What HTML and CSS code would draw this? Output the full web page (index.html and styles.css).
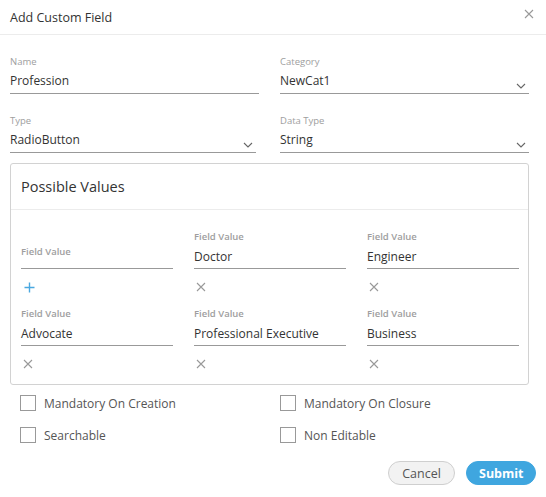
FILE: index.html
```html
<!DOCTYPE html>
<html>
<head>
<meta charset="utf-8">
<link rel="stylesheet" href="styles.css">
</head>
<body>
<div class="dialog">
  <div class="header">
    <span class="title">Add Custom Field</span>
    <span class="close"><svg width="10" height="10" viewBox="0 0 10 10"><path d="M1 1L9 9M9 1L1 9" stroke="#999" stroke-width="1.1"/></svg></span>
  </div>
  <div class="body">
    <div class="row2">
      <div class="field">
        <div class="label">Name</div>
        <div class="value">Profession</div>
      </div>
      <div class="field">
        <div class="label">Category</div>
        <div class="value select">NewCat1<svg class="chev" width="10" height="6" viewBox="0 0 10 6"><path d="M1 1L5 5L9 1" fill="none" stroke="#666" stroke-width="1.1"/></svg></div>
      </div>
    </div>
    <div class="row2 r2">
      <div class="field narrow">
        <div class="label">Type</div>
        <div class="value select">RadioButton<svg class="chev" width="10" height="6" viewBox="0 0 10 6"><path d="M1 1L5 5L9 1" fill="none" stroke="#666" stroke-width="1.1"/></svg></div>
      </div>
      <div class="field">
        <div class="label">Data Type</div>
        <div class="value select">String<svg class="chev" width="10" height="6" viewBox="0 0 10 6"><path d="M1 1L5 5L9 1" fill="none" stroke="#666" stroke-width="1.1"/></svg></div>
      </div>
    </div>
    <div class="panel">
      <div class="panel-head">Possible Values</div>
      <div class="grid">
        <div class="pv">
          <div class="label"></div>
          <div class="value empty"><span class="ph">Field Value</span></div>
          <div class="icon plus"><svg width="11" height="11" viewBox="0 0 11 11"><path d="M5.5 0.5V10.5M0.5 5.5H10.5" stroke="#4aa8e0" stroke-width="1.4"/></svg></div>
        </div>
        <div class="pv">
          <div class="label">Field Value</div>
          <div class="value">Doctor</div>
          <div class="icon"><svg width="10" height="10" viewBox="0 0 10 10"><path d="M1 1L9 9M9 1L1 9" stroke="#999" stroke-width="1.1"/></svg></div>
        </div>
        <div class="pv">
          <div class="label">Field Value</div>
          <div class="value">Engineer</div>
          <div class="icon"><svg width="10" height="10" viewBox="0 0 10 10"><path d="M1 1L9 9M9 1L1 9" stroke="#999" stroke-width="1.1"/></svg></div>
        </div>
        <div class="pv">
          <div class="label">Field Value</div>
          <div class="value">Advocate</div>
          <div class="icon"><svg width="10" height="10" viewBox="0 0 10 10"><path d="M1 1L9 9M9 1L1 9" stroke="#999" stroke-width="1.1"/></svg></div>
        </div>
        <div class="pv">
          <div class="label">Field Value</div>
          <div class="value">Professional Executive</div>
          <div class="icon"><svg width="10" height="10" viewBox="0 0 10 10"><path d="M1 1L9 9M9 1L1 9" stroke="#999" stroke-width="1.1"/></svg></div>
        </div>
        <div class="pv">
          <div class="label">Field Value</div>
          <div class="value">Business</div>
          <div class="icon"><svg width="10" height="10" viewBox="0 0 10 10"><path d="M1 1L9 9M9 1L1 9" stroke="#999" stroke-width="1.1"/></svg></div>
        </div>
      </div>
    </div>
    <div class="checks">
      <label class="check"><span class="box"></span>Mandatory On Creation</label>
      <label class="check"><span class="box"></span>Mandatory On Closure</label>
      <label class="check"><span class="box"></span>Searchable</label>
      <label class="check"><span class="box"></span>Non Editable</label>
    </div>
    <div class="actions">
      <button class="btn cancel">Cancel</button>
      <button class="btn submit">Submit</button>
    </div>
  </div>
</div>
</body>
</html>
```
FILE: styles.css
```css
* { box-sizing: border-box; }
html, body { margin: 0; padding: 0; background: #fff; }
body { font-family: "Open Sans", "Liberation Sans", sans-serif; color: #333; width: 546px; height: 497px; overflow: hidden; }
.dialog { width: 546px; height: 497px; background: #fff; }
.header { height: 35px; border-bottom: 1px solid #ececec; display: flex; align-items: center; justify-content: space-between; padding: 0 12px 0 10px; }
.title { font-size: 12.5px; color: #333; }
.close { display: flex; margin-top: -7px; }
.body { padding: 20px 17px 0 10px; }
.row2 { display: grid; grid-template-columns: 249px 249px; column-gap: 21px; }
.r2 { margin-top: 20px; }
.field.narrow .value { width: 246px; }
.label { font-size: 9.5px; color: #9e9e9e; height: 13px; line-height: 13px; }
.value { font-size: 12px; color: #333; height: 26px; line-height: 26px; border-bottom: 1px solid #999; position: relative; }
.select .chev { position: absolute; right: 3px; top: 15px; }
.panel { margin-top: 10px; width: 519px; border: 1px solid #d2d2d2; border-radius: 3px; height: 222px; }
.panel-head { font-size: 14.5px; color: #333; height: 46px; line-height: 46px; padding-left: 10px; border-bottom: 1px solid #ececec; }
.grid { display: grid; grid-template-columns: 152px 152px 152px; column-gap: 21px; padding: 20px 0 0 10px; }
.pv .label { height: 14px; font-weight: 600; font-size: 9.5px; color: #9e9e9e; }
.pv .value { height: 25px; }
.pv .value.empty { position: relative; }
.ph { position: absolute; left: 0; top: 1px; font-size: 9.5px; font-weight: 600; color: #9e9e9e; line-height: 13px; }
.icon { height: 38px; display: flex; align-items: flex-start; padding: 13px 0 0 2px; }
.icon.plus { padding: 13px 0 0 3px; }
.checks { display: grid; grid-template-columns: 260px 240px; row-gap: 16px; padding: 10px 0 0 10px; }
.check { display: flex; align-items: center; font-size: 12px; color: #555; height: 16px; }
.box { width: 16px; height: 16px; border: 1px solid #999; margin-right: 8px; background: #fff; }
.actions { display: flex; justify-content: flex-end; gap: 11px; margin-top: 18px; margin-right: -7px; }
.btn { font-family: "Open Sans", "Liberation Sans", sans-serif; font-size: 12.5px; height: 24px; border-radius: 12px; padding: 0 12px; cursor: pointer; }
.cancel { background: #f2f2f2; border: 1px solid #cfcfcf; color: #555; width: 67px; }
.submit { background: #3fa6df; border: 1px solid #3fa6df; color: #fff; font-weight: 700; width: 70px; }
```
